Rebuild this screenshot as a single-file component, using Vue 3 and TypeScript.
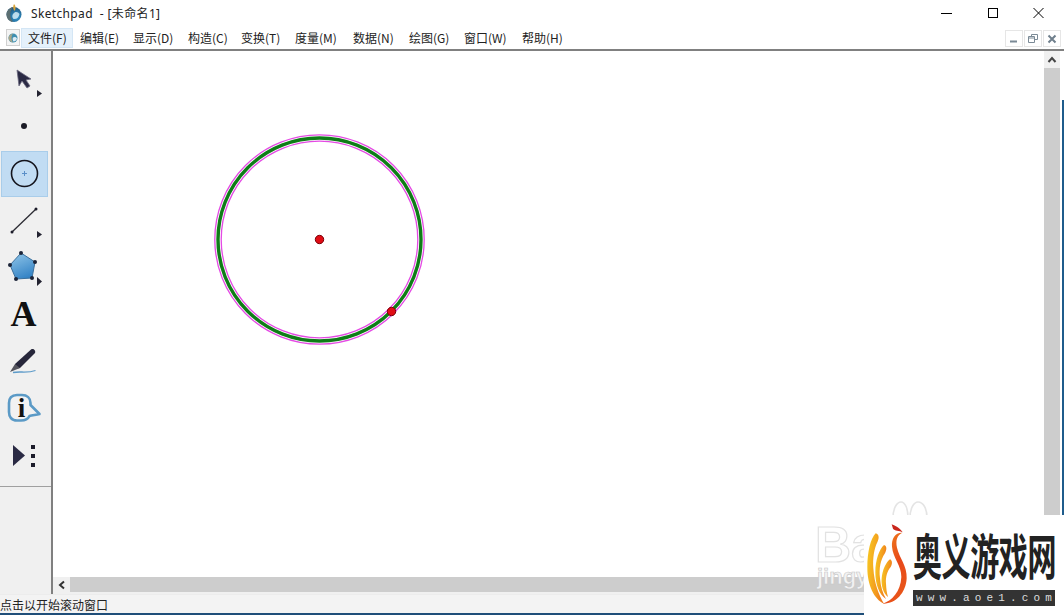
<script setup lang="ts">
const menus = ['文件(F)', '编辑(E)', '显示(D)', '构造(C)', '变换(T)', '度量(M)', '数据(N)', '绘图(G)', '窗口(W)', '帮助(H)']
</script>

<template>
  <div class="window">
    <header class="titlebar">
      <svg class="app-icon" width="18" height="20" viewBox="0 0 18 20">
        <defs>
          <radialGradient id="globe" cx="0.650" cy="0.650" r="0.650">
            <stop offset="0" stop-color="#2f9ad6" />
            <stop offset="1" stop-color="#24567a" />
          </radialGradient>
        </defs>
        <circle cx="9" cy="11.500" r="7.500" fill="url(#globe)" />
        <path d="M8.500 4C4.500 7 4 14 8 19C3.500 18.500 1.500 15 1.500 11.500C1.500 8 4.500 4.500 8.500 4Z" fill="#5c6f72" />
        <path d="M8 11C10 8 13 8.500 14.500 11C14 14.500 11.500 16.500 8.500 16C7 14.500 7 12.500 8 11Z" fill="#dff0f8" opacity="0.800" />
        <path d="M9 1C11 3 11 5.500 9.500 8C7.800 6 7.800 3 9 1Z" fill="#d9a53a" />
      </svg>
      <span class="title">Sketchpad &nbsp;- [未命名1]</span>
      <div class="win-controls">
        <svg width="14" height="14" viewBox="0 0 14 14"><path d="M1 7.500H12" stroke="#000" /></svg>
        <svg width="14" height="14" viewBox="0 0 14 14"><rect x="2.500" y="2.500" width="9" height="9" fill="none" stroke="#000" /></svg>
        <svg width="14" height="14" viewBox="0 0 14 14"><path d="M1.500 2L11.500 12M11.500 2L1.500 12" stroke="#000" /></svg>
      </div>
    </header>

    <nav class="menubar">
      <svg class="doc-icon" width="14" height="17" viewBox="0 0 14 17">
        <rect x="0.500" y="0.500" width="13" height="16" fill="#f4f4f4" stroke="#d0d0d0" />
        <circle cx="7" cy="9" r="4.500" fill="#3f8fb0" />
        <path d="M7 4.500C5 7 5 11 7 13.500C4 13 2.500 11 2.500 9C2.500 7 5 5 7 4.500Z" fill="#a8a68a" />
        <path d="M7 8.500C8.500 7.500 10.500 8 11 9.500C10.500 11.500 9 12.500 7.500 12.500C6.500 11 6.500 9.500 7 8.500Z" fill="#dcecf4" />
      </svg>
      <div class="menu-list">
        <span v-for="(m, i) in menus" :key="m" class="menu" :class="{ active: i === 0 }">{{ m }}</span>
      </div>
      <div class="mdi-controls">
        <span class="mdi"><svg width="10" height="10" viewBox="0 0 10 10"><rect x="1" y="6.500" width="7" height="2" fill="#7b8a96" /></svg></span>
        <span class="mdi"><svg width="10" height="10" viewBox="0 0 10 10"><path d="M3.500 2.500V0.500H9.500V5.500H7M0.500 2.500H6.500V8.500H0.500ZM0.500 4H6.500" fill="none" stroke="#7b8a96" /></svg></span>
        <span class="mdi"><svg width="10" height="10" viewBox="0 0 10 10"><path d="M1.500 1.500L8.500 8.500M8.500 1.500L1.500 8.500" stroke="#6f7f8c" stroke-width="2" /></svg></span>
      </div>
    </nav>

    <main class="body">
      <aside class="toolbox">
        <div class="tool">
          <svg width="47" height="47" viewBox="0 0 47 47">
            <path d="M16 14L18 30L21 25L26 32L29 30L25 24L30 23Z" fill="#2a2a44" stroke="#6c6a80" stroke-width="0.800" />
            <path d="M36 34L41 37.500L36 41Z" fill="#222230" />
          </svg>
        </div>
        <div class="tool">
          <svg width="47" height="47" viewBox="0 0 47 47"><circle cx="23" cy="23" r="3" fill="#1c1c26" /></svg>
        </div>
        <div class="tool selected">
          <svg width="47" height="46" viewBox="0 0 47 46">
            <circle cx="23.500" cy="22.500" r="13" fill="none" stroke="#14141c" stroke-width="1.600" />
            <path d="M23.500 20V25M21 22.500H26" stroke="#5a8fc8" stroke-width="1" />
          </svg>
        </div>
        <div class="tool">
          <svg width="47" height="47" viewBox="0 0 47 47">
            <path d="M11 35L35 12" stroke="#2b2b33" stroke-width="1.300" />
            <circle cx="11" cy="35" r="1.500" fill="#1c1c2a" />
            <circle cx="35" cy="12" r="1.500" fill="#1c1c2a" />
            <path d="M36 34L41 37.500L36 41Z" fill="#222230" />
          </svg>
        </div>
        <div class="tool">
          <svg width="47" height="47" viewBox="0 0 47 47">
            <defs>
              <linearGradient id="poly" x1="0.300" y1="0" x2="0.700" y2="1">
                <stop offset="0" stop-color="#8ac1e6" />
                <stop offset="1" stop-color="#2f80c4" />
              </linearGradient>
            </defs>
            <path d="M9 21L20 9L34 18L31 34L15 35Z" fill="url(#poly)" stroke="#3a6f9c" />
            <g fill="#1c2438">
              <circle cx="9" cy="21" r="2" /><circle cx="20" cy="9" r="2" /><circle cx="34" cy="18" r="2" />
              <circle cx="31" cy="34" r="2" /><circle cx="15" cy="35" r="2" />
            </g>
            <path d="M36 33L41 37.500L36 42Z" fill="#222230" />
          </svg>
        </div>
        <div class="tool letter">A</div>
        <div class="tool">
          <svg width="47" height="47" viewBox="0 0 47 47">
            <path d="M14 26L30 11.500C32 10 35 12 34 15L19 30L14 31Z" fill="#26263a" />
            <path d="M9 34L14 26L19 30Z" fill="#55555e" />
            <path d="M12 34.500C19 33 26 35.500 34.500 32.500" stroke="#5d9bc9" fill="none" stroke-width="1.300" />
          </svg>
        </div>
        <div class="tool">
          <svg width="47" height="47" viewBox="0 0 47 47">
            <path d="M16 10H21C26 10 29.500 13 29.500 18V20L38.500 29C35 30 31 30 28.500 31C27 34 24 35.500 20 35.500H16C10.500 35.500 8 32 8 27V18C8 13 10.500 10 16 10Z" fill="#f2f2f2" stroke="#5b9ac6" stroke-width="2.600" stroke-linejoin="round" />
            <text x="20.500" y="32" class="info-i">i</text>
          </svg>
        </div>
        <div class="tool">
          <svg width="47" height="47" viewBox="0 0 47 47">
            <path d="M12 13L24 23.500L12 34Z" fill="#2a2a44" />
            <rect x="30" y="13" width="4" height="4" fill="#1c1c2a" />
            <rect x="30" y="22" width="4" height="4" fill="#1c1c2a" />
            <rect x="30" y="31" width="4" height="4" fill="#1c1c2a" />
          </svg>
        </div>
        <div class="divider"></div>
      </aside>

      <section class="canvas">
        <svg class="drawing" width="992" height="526" viewBox="0 0 992 526">
          <circle cx="266.500" cy="188.500" r="104.700" fill="none" stroke="#e44ae4" stroke-width="1.300" />
          <circle cx="266.500" cy="188.500" r="98.300" fill="none" stroke="#e44ae4" stroke-width="1.300" />
          <circle cx="266.500" cy="188.500" r="101.500" fill="none" stroke="#0e7d17" stroke-width="3.400" />
          <circle cx="266.500" cy="188.500" r="4.200" fill="#e00c14" stroke="#7a0008" />
          <circle cx="338.500" cy="260.500" r="4.200" fill="#e00c14" stroke="#7a0008" />
        </svg>
        <div class="hscroll">
          <span class="arrow">
            <svg width="10" height="10" viewBox="0 0 10 10"><path d="M7 1.500L3 5L7 8.500" fill="none" stroke="#333" stroke-width="2" /></svg>
          </span>
          <div class="hthumb"></div>
        </div>
        <span class="ghost-bai">Ba</span>
        <span class="ghost-jing">jingy</span>
        <svg class="ghost-paw" width="40" height="20" viewBox="0 0 40 20">
          <path d="M2 18C2 8 6 2 10 2C14 2 17 8 17 18M19 18C19 8 23 2 27 2C32 2 36 8 36 18" fill="none" stroke="#e4e4e4" stroke-width="1.600" />
        </svg>
      </section>

      <aside class="vscroll">
        <span class="arrow up">
          <svg width="10" height="10" viewBox="0 0 10 10"><path d="M1.500 7L5 3L8.500 7" fill="none" stroke="#444" stroke-width="2" /></svg>
        </span>
        <div class="vthumb"></div>
      </aside>
      <div class="edge"></div>
    </main>

    <footer class="status">点击以开始滚动窗口</footer>

    <div class="watermark">
      <svg class="flame" width="49" height="100" viewBox="12 60 147 300">
        <defs>
          <linearGradient id="fl" x1="0" y1="0" x2="1" y2="0.300">
            <stop offset="0" stop-color="#f7cb22" />
            <stop offset="0.700" stop-color="#f39a1e" />
            <stop offset="1" stop-color="#ee7a1c" />
          </linearGradient>
          <linearGradient id="body" x1="0" y1="0" x2="0.600" y2="1">
            <stop offset="0" stop-color="#f08a1c" />
            <stop offset="0.600" stop-color="#e8481a" />
            <stop offset="1" stop-color="#e8561a" />
          </linearGradient>
        </defs>
        <path d="M95 88C103 92 118 97 128 112C118 106 104 108 99 101Z" fill="#c9261c" />
        <path d="M127 113C112 120 106 134 111 158C118 190 142 212 140 250C138 295 105 328 68 326C95 318 122 290 124 246C125 212 99 190 96 155C94 130 106 112 127 113Z" fill="url(#body)" />
        <path d="M47 115C58 118 58 130 52 142C42 162 38 190 40 220C43 265 56 300 72 326C42 312 22 270 22 218C22 170 32 130 47 115Z" fill="url(#fl)" />
        <path d="M72 150C82 153 80 166 74 176C62 194 56 220 60 250C62 275 68 295 78 312C58 300 46 268 46 232C46 195 58 162 72 150Z" fill="url(#fl)" />
        <path d="M90 193C98 197 97 208 92 216C82 228 76 246 78 266C79 282 80 292 84 306C70 296 63 272 65 250C67 225 78 202 90 193Z" fill="url(#fl)" />
      </svg>
      <div class="wm-text">
        <div class="wm-title">奥义游戏网</div>
        <div class="wm-url">
          <span v-for="(c, i) in 'www.aoe1.com'" :key="i">{{ c }}</span>
        </div>
      </div>
    </div>
  </div>
</template>

<style>
html, body { margin: 0; padding: 0; background: #fff; }
</style>

<style scoped>
.window {
  position: relative;
  width: 1064px;
  height: 615px;
  display: flex;
  flex-direction: column;
  overflow: hidden;
  background: #fff;
  font-family: "Noto Sans CJK SC", "Liberation Sans", sans-serif;
  font-size: 12px;
  color: #222;
}
.titlebar {
  height: 26px;
  padding-bottom: 2px;
  display: flex;
  align-items: center;
  padding-left: 5px;
  flex: none;
}
.app-icon { margin-right: 8px; }
.title {
  font-family: "Noto Sans", "Noto Sans CJK SC", sans-serif;
  font-size: 12px;
  letter-spacing: 0.35px;
}
.win-controls {
  margin-left: auto;
  display: flex;
  gap: 32px;
  padding-right: 18px;
}
.menubar {
  height: 21px;
  display: flex;
  align-items: flex-start;
  padding-left: 6px;
  flex: none;
  border-bottom: 2px solid #808080;
}
.doc-icon { margin-top: 1px; margin-right: 1px; }
.menu-list {
  display: grid;
  grid-template-columns: 52px 53px 55px 53px 54px 58px 56px 55px 58px 50px;
}
.menu {
  padding-left: 7px;
  height: 20px;
  line-height: 20px;
  white-space: nowrap;
  font-size: 12px;
}
.menu.active {
  background: #e5f1fb;
  box-shadow: inset 0 0 0 1px #d4e6f5;
}
.mdi-controls {
  margin-left: auto;
  display: flex;
  gap: 1px;
  padding-top: 2px;
  padding-right: 3px;
}
.mdi {
  width: 18px;
  height: 17px;
  border: 1px solid #e6e6e6;
  display: flex;
  align-items: center;
  justify-content: center;
  box-sizing: border-box;
}
.body {
  flex: none;
  height: 543px;
  display: flex;
}
.toolbox {
  width: 51px;
  flex: none;
  background: #f0f0f0;
  border-right: 2px solid #808080;
  padding-top: 5px;
  box-sizing: content-box;
  display: flex;
  flex-direction: column;
  align-items: flex-start;
}
.tool {
  margin-left: 1px;
  width: 47px;
  height: 47px;
  flex: none;
  display: block;
}
.tool svg { display: block; }
.tool.selected {
  background: #c1dcf3;
  box-shadow: inset 0 0 0 1px #a9cdea;
  height: 46px;
  margin-top: 1px;
}
.tool.letter {
  font-family: "Liberation Serif", serif;
  font-weight: 700;
  font-size: 36px;
  line-height: 47px;
  text-align: center;
  padding-right: 2px;
  width: 45px;
  color: #111;
}
.divider {
  align-self: stretch;
  margin-top: 7px;
  border-top: 1px solid #a0a0a0;
}
.info-i {
  font-family: "Liberation Serif", serif;
  font-weight: 700;
  font-size: 27px;
  fill: #111;
  text-anchor: middle;
}
.canvas {
  width: 991px;
  flex: none;
  display: flex;
  flex-direction: column;
  position: relative;
  overflow: hidden;
}
.drawing {
  flex: none;
  display: block;
}
.ghost-bai {
  position: absolute;
  left: 762px;
  top: 474px;
  font-family: "Liberation Sans", sans-serif;
  font-weight: 700;
  font-size: 50px;
  line-height: 40px;
  color: transparent;
  -webkit-text-stroke: 1.200px #e2e2e2;
}
.ghost-jing {
  position: absolute;
  left: 764px;
  top: 515px;
  font-family: "Liberation Sans", sans-serif;
  font-weight: 700;
  font-size: 22px;
  line-height: 1;
  color: #f2f2f2;
  -webkit-text-stroke: 0.600px #c6c6c6;
}
.ghost-paw {
  position: absolute;
  left: 838px;
  top: 449px;
}
.hscroll {
  height: 15px;
  display: flex;
  flex: none;
  border-bottom: 2px solid #f0f0f0;
}
.hthumb {
  flex: 1;
  background: #cdcdcd;
}
.arrow {
  width: 17px;
  height: 15px;
  flex: none;
  display: flex;
  align-items: center;
  justify-content: center;
  background: #f0f0f0;
}
.vscroll {
  width: 16px;
  flex: none;
  display: flex;
  flex-direction: column;
  height: 526px;
  background: #f0f0f0;
}
.arrow.up {
  width: 16px;
  height: 17px;
}
.vthumb {
  flex: 1;
  background: #cdcdcd;
}
.edge {
  margin-left: 2px;
  margin-top: 49px;
  width: 2px;
  height: 415px;
  background: #1f5c8c;
}
.status {
  flex: none;
  height: 18px;
  line-height: 19px;
  background: #f3f3f3;
  font-size: 12px;
  border-bottom: 2px solid #1f4e79;
  border-top: 1px solid #ececec;
  white-space: nowrap;
}
.watermark {
  position: absolute;
  right: 0;
  bottom: 0;
  width: 200px;
  height: 100px;
  background: #fff;
  display: flex;
  align-items: flex-start;
}
.flame { flex: none; display: block; }
.wm-text {
  padding-top: 14px;
  width: 151px;
}
.wm-title {
  font-family: "Noto Sans CJK SC", sans-serif;
  font-weight: 700;
  font-size: 29px;
  line-height: 29px;
  color: #222;
  white-space: nowrap;
  letter-spacing: -0.4px;
  height: 61px;
  transform: scaleY(1.7);
  transform-origin: top left;
}
.wm-url {
  width: 142px;
  height: 16px;
  box-sizing: border-box;
  background: #333;
  color: #ddd;
  font-family: "Liberation Mono", monospace;
  font-size: 11px;
  line-height: 16px;
  display: flex;
  justify-content: space-between;
  padding: 0 3px;
}
</style>
